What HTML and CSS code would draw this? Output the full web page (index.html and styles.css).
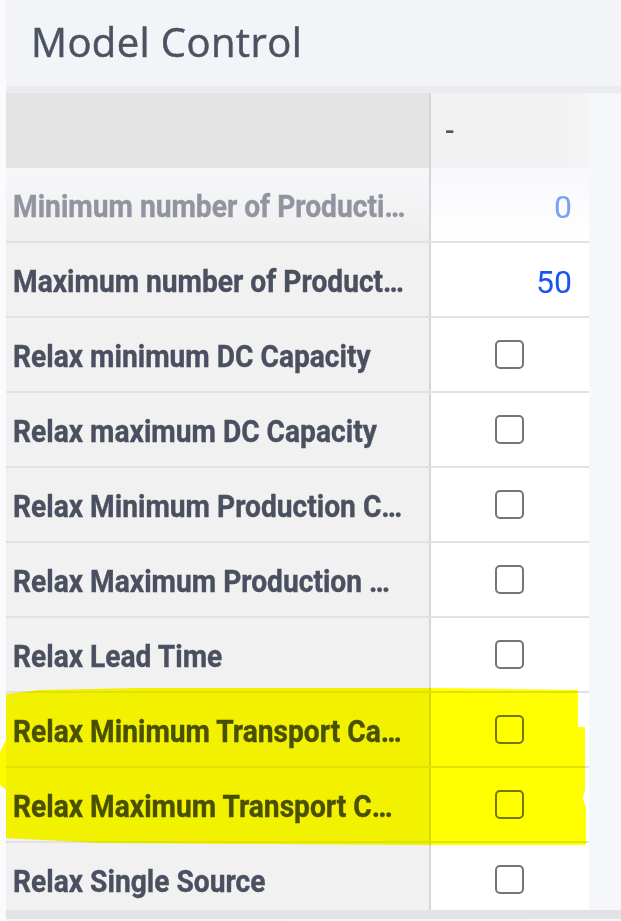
FILE: index.html
```html
<!DOCTYPE html>
<html lang="en">
<head>
<meta charset="utf-8">
<title>Model Control</title>
<link rel="stylesheet" href="styles.css">
</head>
<body>
<div class="page">
  <section class="panel">
    <header class="panel-header">
      <h1 class="panel-title">Model Control</h1>
    </header>
    <div class="gap-strip"></div>
    <div class="table-wrap">
      <div class="table">
        <div class="row head">
          <div class="cell label"></div>
          <div class="cell value"><span class="dash">-</span></div>
        </div>
        <div class="row disabled">
          <div class="cell label"><span class="txt">Minimum number of Producti…</span></div>
          <div class="cell value num">0</div>
        </div>
        <div class="row">
          <div class="cell label"><span class="txt">Maximum number of Product…</span></div>
          <div class="cell value num">50</div>
        </div>
        <div class="row">
          <div class="cell label"><span class="txt">Relax minimum DC Capacity</span></div>
          <div class="cell value"><span class="check"></span></div>
        </div>
        <div class="row">
          <div class="cell label"><span class="txt">Relax maximum DC Capacity</span></div>
          <div class="cell value"><span class="check"></span></div>
        </div>
        <div class="row">
          <div class="cell label"><span class="txt">Relax Minimum Production C…</span></div>
          <div class="cell value"><span class="check"></span></div>
        </div>
        <div class="row">
          <div class="cell label"><span class="txt">Relax Maximum Production …</span></div>
          <div class="cell value"><span class="check"></span></div>
        </div>
        <div class="row">
          <div class="cell label"><span class="txt">Relax Lead Time</span></div>
          <div class="cell value"><span class="check"></span></div>
        </div>
        <div class="row">
          <div class="cell label"><span class="txt">Relax Minimum Transport Ca…</span></div>
          <div class="cell value"><span class="check"></span></div>
        </div>
        <div class="row">
          <div class="cell label"><span class="txt">Relax Maximum Transport C…</span></div>
          <div class="cell value"><span class="check"></span></div>
        </div>
        <div class="row last">
          <div class="cell label"><span class="txt">Relax Single Source</span></div>
          <div class="cell value"><span class="check"></span></div>
        </div>
      </div>
      <div class="scroll-strip"></div>
    </div>
  </section>
  <div class="highlight"></div>
</div>
</body>
</html>
```

FILE: styles.css
```css
html, body {
  margin: 0;
  padding: 0;
}
body {
  background: #fbfbfd;
  width: 621px;
  height: 921px;
  overflow: hidden;
}
.page {
  position: relative;
  padding-left: 6px;
  height: 921px;
}
.panel {
  background: linear-gradient(90deg, #f4f5f9, #f6f7fb);
  height: 921px;
  display: flex;
  flex-direction: column;
}
.panel-header {
  height: 86px;
  background: #f3f4f8;
  display: flex;
  align-items: center;
}
.panel-title {
  margin: 0 0 0 25px;
  font-family: "Open Sans", "Noto Sans", sans-serif;
  font-weight: 500;
  font-size: 40px;
  letter-spacing: 0.4px;
  color: #4b5262;
  line-height: 1;
  padding-bottom: 2px;
  -webkit-text-stroke: 0.5px #4b5262;
}
.gap-strip {
  height: 7px;
  background: #ebecf0;
}
.table-wrap {
  display: flex;
  flex-direction: column;
  height: 826px;
  overflow: hidden;
}
.table {
  width: 583px;
  height: 819px;
  overflow: hidden;
}
.row {
  display: grid;
  grid-template-columns: 425px 158px;
  height: 73px;
  border-bottom: 2px solid #e2e2e5;
}
.row.head {
  height: 75px;
  border-bottom: none;
}
.row.last {
  border-bottom: none;
}
.cell {
  display: flex;
  align-items: center;
  min-width: 0;
}
.label {
  background: #f1f1f1;
  border-right: 2px solid #d6d6da;
  padding-left: 7px;
  font-family: "Roboto", sans-serif;
  font-weight: 700;
  font-size: 32px;
  color: #4a5060;
  white-space: nowrap;
  position: relative;
  z-index: 1;
}
.txt {
  display: inline-block;
  transform: scaleX(0.88);
  transform-origin: left center;
  margin-top: 2px;
  -webkit-text-stroke: 0.4px currentColor;
}
.value {
  background: #ffffff;
  justify-content: center;
}
.head .label {
  background: #e4e4e4;
}
.head .value {
  background: linear-gradient(90deg, #f1f1f1 0%, #f1f1f1 75%, #f4f4f4 100%);
  justify-content: flex-start;
  padding-left: 14px;
}
.dash {
  font-family: "Roboto", sans-serif;
  font-size: 28px;
  color: #4b5262;
  font-weight: 500;
}
.num {
  justify-content: flex-end;
  padding-right: 17px;
  font-family: "Roboto", sans-serif;
  font-size: 32px;
  color: #1a55f0;
  padding-top: 4px;
}
.disabled .label {
  color: #9295a0;
  background: linear-gradient(180deg, #f6f7f9, #efefef);
}
.disabled .value {
  color: #77a0f6;
  background: linear-gradient(180deg, #f7f8fb, #ffffff);
}
.check {
  width: 25px;
  height: 25px;
  border: 2px solid #757575;
  border-radius: 5px;
  box-sizing: content-box;
  margin-right: 2px;
}
.scroll-strip {
  height: 9px;
  background: #e3e3e7;
}
.highlight {
  position: absolute;
  left: 0;
  top: 686px;
  width: 590px;
  height: 162px;
  background: #ffff00;
  mix-blend-mode: multiply;
  z-index: 2;
  clip-path: polygon(6px 8px, 40px 4px, 140px 2px, 430px 2px, 578px 4px, 578px 41px, 585px 41px, 585px 104px, 583px 112px, 586px 122px, 586px 159px, 430px 159px, 100px 157px, 6px 152px, 6px 104px, 0px 99px, 0px 66px, 6px 54px);
}
```
